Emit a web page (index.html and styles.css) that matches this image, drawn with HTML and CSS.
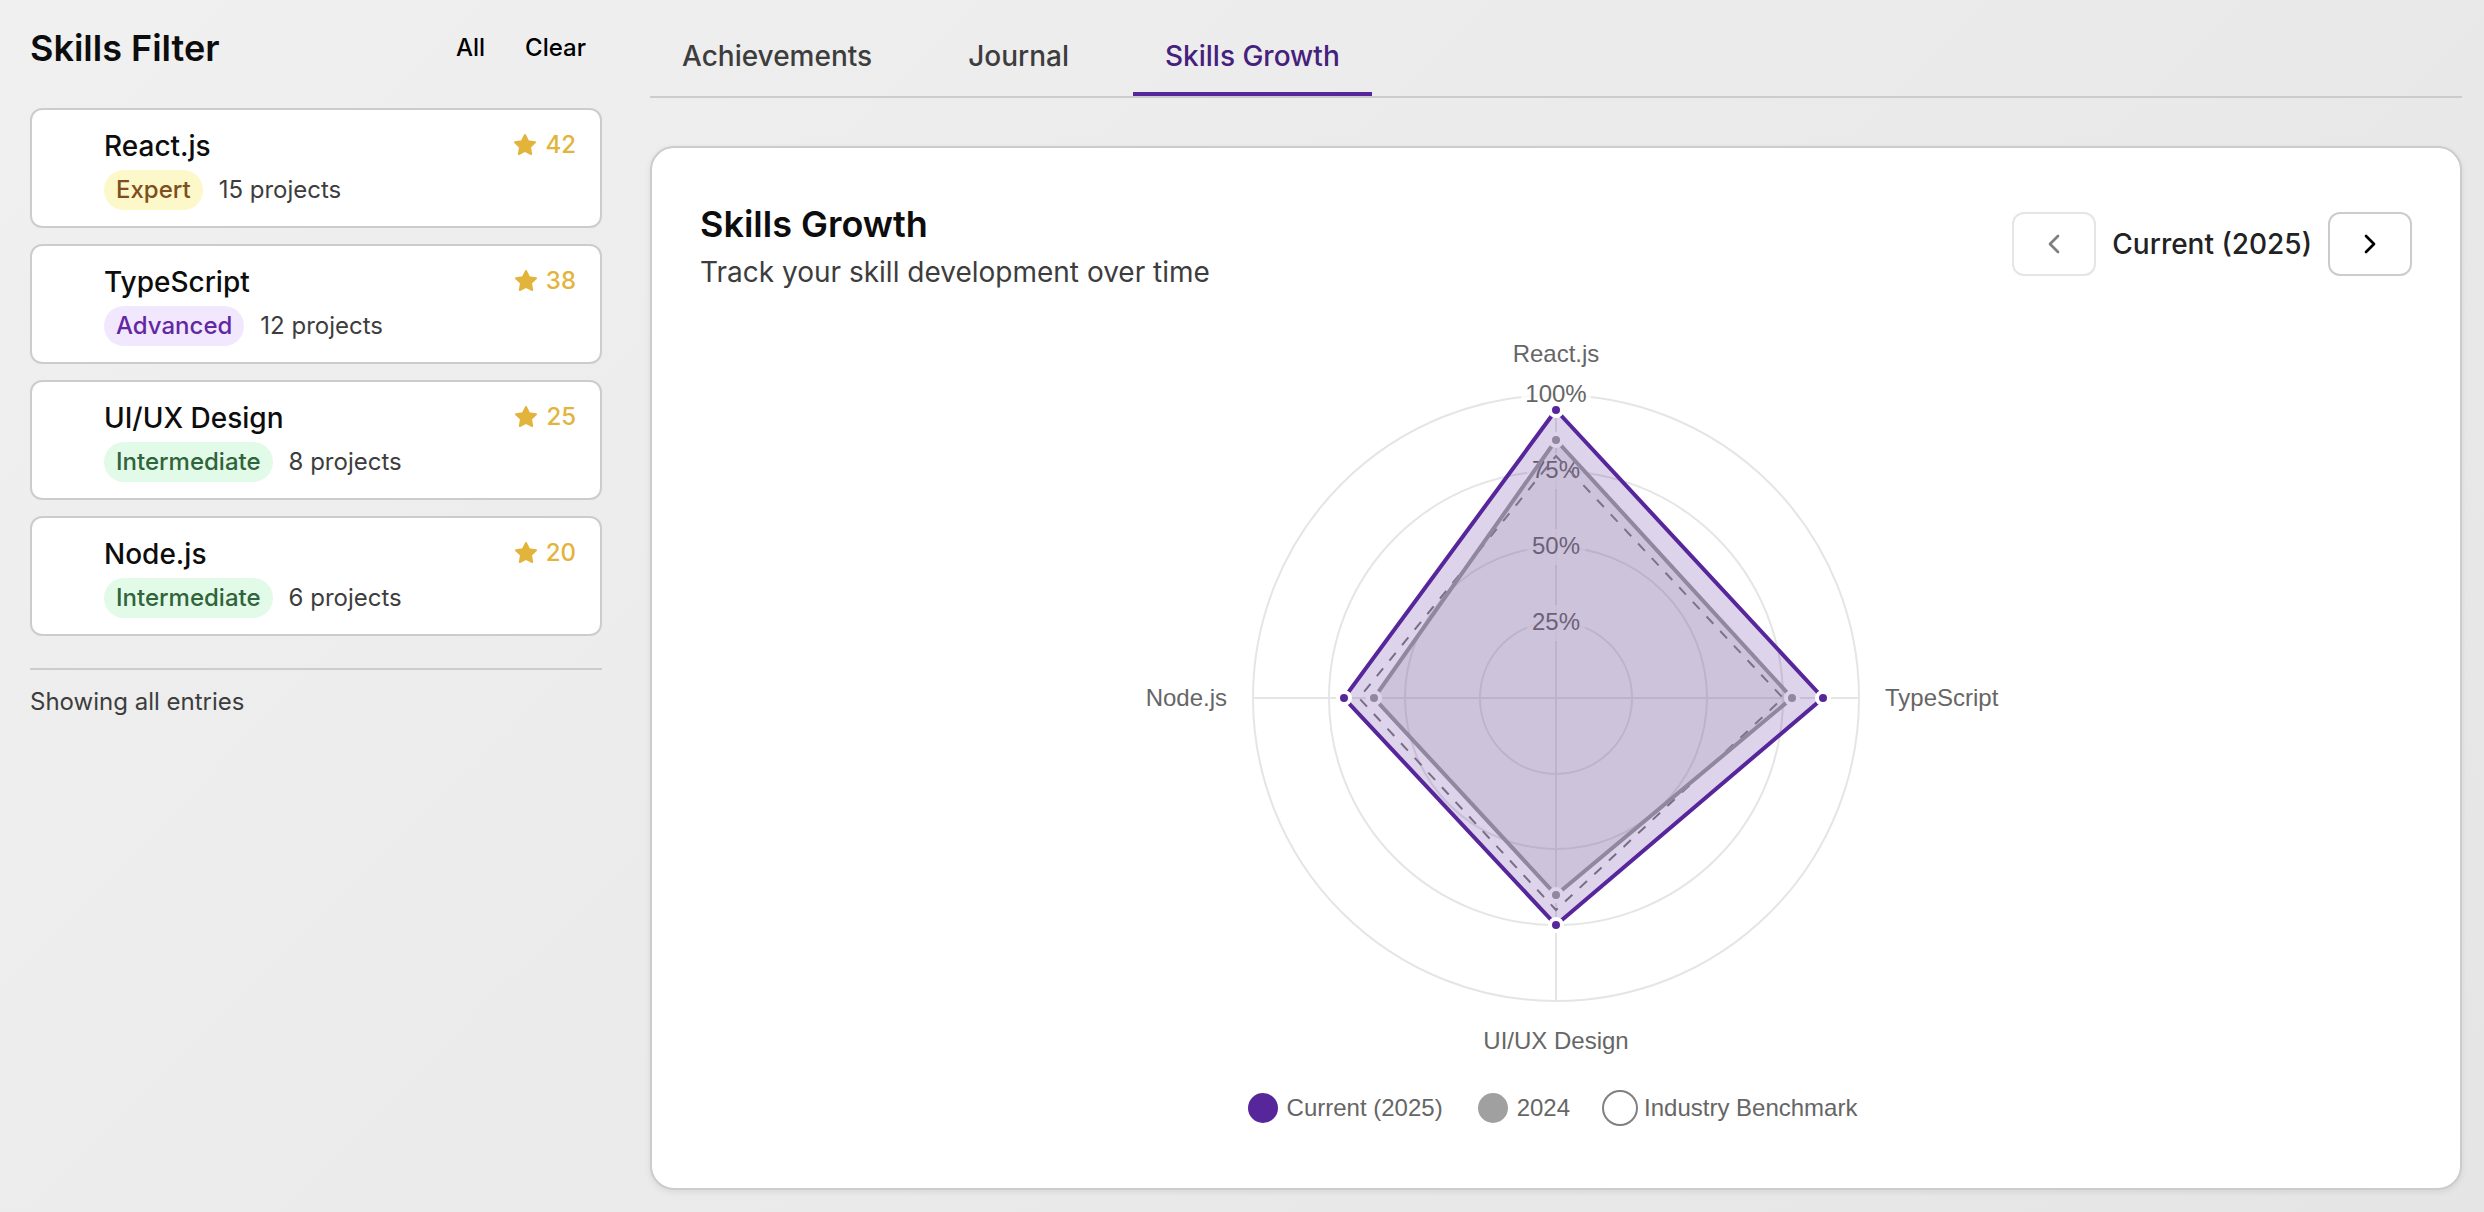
FILE: index.html
```html
<!DOCTYPE html>
<html lang="en">
<head>
<meta charset="utf-8">
<meta name="viewport" content="width=device-width, initial-scale=1">
<title>Skills Growth</title>
<link rel="stylesheet" href="styles.css">
</head>
<body>
<svg class="sprite" aria-hidden="true">
  <symbol id="star" viewBox="0 0 24 24"><polygon points="12 2 15.09 8.26 22 9.27 17 14.14 18.18 21.02 12 17.77 5.82 21.02 7 14.14 2 9.27 8.91 8.26"/></symbol>
</svg>
<div class="layout">
  <aside class="sidebar">
    <header class="sidebar-header">
      <h2 class="heading">Skills Filter</h2>
      <div class="filter-actions">
        <button class="text-button" type="button">All</button>
        <button class="text-button" type="button">Clear</button>
      </div>
    </header>
    <ul class="skill-list">
      <li><button class="skill-card" type="button">
        <span class="skill-icon"></span>
        <span class="skill-body">
          <span class="skill-name">React.js</span>
          <span class="skill-meta"><span class="badge badge-expert">Expert</span><span>15 projects</span></span>
        </span>
        <span class="skill-score"><svg class="star"><use href="#star"/></svg>42</span>
      </button></li>
      <li><button class="skill-card" type="button">
        <span class="skill-icon"></span>
        <span class="skill-body">
          <span class="skill-name">TypeScript</span>
          <span class="skill-meta"><span class="badge badge-advanced">Advanced</span><span>12 projects</span></span>
        </span>
        <span class="skill-score"><svg class="star"><use href="#star"/></svg>38</span>
      </button></li>
      <li><button class="skill-card" type="button">
        <span class="skill-icon"></span>
        <span class="skill-body">
          <span class="skill-name">UI/UX Design</span>
          <span class="skill-meta"><span class="badge badge-intermediate">Intermediate</span><span>8 projects</span></span>
        </span>
        <span class="skill-score"><svg class="star"><use href="#star"/></svg>25</span>
      </button></li>
      <li><button class="skill-card" type="button">
        <span class="skill-icon"></span>
        <span class="skill-body">
          <span class="skill-name">Node.js</span>
          <span class="skill-meta"><span class="badge badge-intermediate">Intermediate</span><span>6 projects</span></span>
        </span>
        <span class="skill-score"><svg class="star"><use href="#star"/></svg>20</span>
      </button></li>
    </ul>
    <p class="filter-status">Showing all entries</p>
  </aside>

  <main class="main">
    <div class="tabs" role="tablist">
      <button class="tab" type="button" role="tab" aria-selected="false">Achievements</button>
      <button class="tab" type="button" role="tab" aria-selected="false">Journal</button>
      <button class="tab" type="button" role="tab" aria-selected="true">Skills Growth</button>
    </div>

    <section class="panel">
      <header class="panel-header">
        <div>
          <h2 class="heading panel-title">Skills Growth</h2>
          <p class="panel-subtitle">Track your skill development over time</p>
        </div>
        <div class="period">
          <button class="period-button" type="button" aria-label="Previous period" disabled>
            <svg class="chevron" viewBox="0 0 24 24"><path d="m15 18-6-6 6-6"/></svg>
          </button>
          <span class="period-label">Current (2025)</span>
          <button class="period-button" type="button" aria-label="Next period">
            <svg class="chevron" viewBox="0 0 24 24"><path d="m9 18 6-6-6-6"/></svg>
          </button>
        </div>
      </header>

      <svg class="radar" viewBox="-450 -406 900 798" role="img" aria-label="Radar chart of skill levels">
        <g class="grid">
          <circle r="76"/><circle r="151"/><circle r="227"/><circle r="303"/>
          <path d="M0-303V303M-303 0H303"/>
        </g>
        <g class="backdrop">
          <rect x="-35" y="-321" width="70" height="36"/>
          <rect x="-29" y="-245" width="58" height="36"/>
          <rect x="-29" y="-169" width="58" height="36"/>
          <rect x="-29" y="-93" width="58" height="36"/>
        </g>
        <g class="label">
          <text y="-296">100%</text>
          <text y="-220">75%</text>
          <text y="-144">50%</text>
          <text y="-68">25%</text>
          <text y="-336">React.js</text>
          <text y="351">UI/UX Design</text>
          <text class="label-start" x="329" y="8">TypeScript</text>
          <text class="label-end" x="-329" y="8">Node.js</text>
        </g>
        <path class="series-benchmark" d="M0-242L227 0L0 212L-197 0Z"/>
        <path class="series-previous" d="M0-258L236 0L0 197L-182 0Z"/>
        <g class="points-previous">
          <circle cy="-258" r="6"/><circle cx="236" r="6"/><circle cy="197" r="6"/><circle cx="-182" r="6"/>
        </g>
        <path class="series-current" d="M0-288L267 0L0 227L-212 0Z"/>
        <g class="points-current">
          <circle cy="-288" r="6"/><circle cx="267" r="6"/><circle cy="227" r="6"/><circle cx="-212" r="6"/>
        </g>
      </svg>

      <ul class="legend">
        <li class="legend-item"><svg class="legend-mark" viewBox="-18 -18 36 36"><circle class="mark-current" r="15"/></svg>Current (2025)</li>
        <li class="legend-item"><svg class="legend-mark" viewBox="-18 -18 36 36"><circle class="mark-previous" r="15"/></svg>2024</li>
        <li class="legend-item"><svg class="legend-mark" viewBox="-18 -18 36 36"><circle class="mark-benchmark" r="17"/></svg>Industry Benchmark</li>
      </ul>
    </section>
  </main>
</div>
</body>
</html>
```
FILE: styles.css
```css
:root {
  --ink: #0d0d0d;
  --muted: #3d3d3d;
  --line: #cccccc;
  --purple: #56269a;
  --gold: #e2b43c;
  --chart-text: #666666;
}

* {
  box-sizing: border-box;
}

body {
  margin: 0;
  min-height: 100vh;
  background: linear-gradient(135deg, #f0f0f0, #e5e5e5);
  color: var(--ink);
  font-family: Inter, "Liberation Sans", sans-serif;
  font-size: 24px;
  line-height: 32px;
}

h2,
p,
ul {
  margin: 0;
  padding: 0;
}

ul {
  list-style: none;
}

button {
  margin: 0;
  border: 0;
  background: none;
  color: inherit;
  font: inherit;
  cursor: pointer;
}

.sprite {
  display: none;
}

.layout {
  display: grid;
  grid-template-columns: 572px minmax(0, 1fr);
  gap: 48px;
  align-items: start;
  padding: 16px 22px 22px 30px;
}

.heading {
  font-size: 36px;
  font-weight: 600;
  line-height: 56px;
}

/* Sidebar */

.sidebar-header {
  display: flex;
  align-items: center;
  justify-content: space-between;
  height: 64px;
  margin-bottom: 28px;
}

.filter-actions {
  display: flex;
  gap: 8px;
}

.text-button {
  padding: 8px 16px;
  color: #000000;
  font-weight: 500;
}

.skill-list {
  display: grid;
  gap: 16px;
}

.skill-card {
  display: flex;
  gap: 16px;
  width: 100%;
  padding: 16px 24px;
  border: 2px solid var(--line);
  border-radius: 12px;
  background: #ffffff;
  text-align: left;
}

.skill-icon {
  width: 32px;
}

.skill-body {
  display: grid;
  flex: 1;
  gap: 4px;
}

.skill-name {
  font-size: 28px;
  font-weight: 500;
  line-height: 40px;
}

.skill-meta {
  display: flex;
  align-items: center;
  gap: 16px;
  color: var(--muted);
}

.badge {
  padding: 4px 12px;
  border-radius: 20px;
  font-weight: 500;
}

.badge-expert {
  background: #fdf8c9;
  color: #7d4f20;
}

.badge-advanced {
  background: #f1e8fd;
  color: #6427a2;
}

.badge-intermediate {
  background: #e2fae8;
  color: #30643b;
}

.skill-score {
  display: flex;
  align-items: center;
  gap: 8px;
  height: 38px;
  color: var(--gold);
  font-weight: 500;
}

.star {
  width: 24px;
  height: 24px;
  fill: currentColor;
  stroke: currentColor;
  stroke-linejoin: round;
  stroke-width: 2;
}

.filter-status {
  margin-top: 32px;
  padding-top: 16px;
  border-top: 2px solid var(--line);
  color: var(--muted);
}

/* Tabs */

.tabs {
  display: flex;
  gap: 32px;
  margin-bottom: 48px;
  border-bottom: 2px solid var(--line);
}

.tab {
  padding: 20px 32px 16px;
  border-bottom: 4px solid transparent;
  color: var(--muted);
  font-size: 28px;
  font-weight: 500;
  line-height: 40px;
}

.tab[aria-selected="true"] {
  border-bottom-color: var(--purple);
  color: #45207c;
}

/* Growth panel */

.panel {
  padding: 48px 48px 14px;
  border: 2px solid var(--line);
  border-radius: 24px;
  background: #ffffff;
  box-shadow: 0 2px 6px rgba(0, 0, 0, 0.08);
}

.panel-header {
  display: flex;
  align-items: center;
  justify-content: space-between;
}

.panel-subtitle {
  color: var(--muted);
  font-size: 28px;
  line-height: 40px;
}

.period {
  display: flex;
  align-items: center;
  gap: 16px;
}

.period-label {
  color: #222222;
  font-size: 28px;
  font-weight: 500;
}

.period-button {
  display: grid;
  place-items: center;
  width: 84px;
  height: 64px;
  padding: 0;
  border: 2px solid var(--line);
  border-radius: 12px;
  color: #000000;
}

.period-button:disabled {
  opacity: 0.5;
  cursor: default;
}

.chevron {
  width: 32px;
  height: 32px;
  fill: none;
  stroke: currentColor;
  stroke-linecap: round;
  stroke-linejoin: round;
  stroke-width: 2;
}

/* Radar chart */

.radar {
  display: block;
  width: 100%;
  max-width: 900px;
  margin: 0 auto;
}

.grid {
  fill: none;
  stroke: #e5e5e5;
  stroke-width: 2;
}

.backdrop {
  fill: #ffffff;
  fill-opacity: 0.75;
}

.label {
  fill: var(--chart-text);
  font-family: "Liberation Sans", Arial, sans-serif;
  font-size: 24px;
  text-anchor: middle;
}

.label-start {
  text-anchor: start;
}

.label-end {
  text-anchor: end;
}

.series-benchmark {
  fill: none;
  stroke: #808080;
  stroke-dasharray: 10 10;
  stroke-width: 2;
}

.series-previous {
  fill: #a0a0a0;
  fill-opacity: 0.2;
  stroke: #a0a0a0;
  stroke-width: 4;
}

.series-current {
  fill: var(--purple);
  fill-opacity: 0.2;
  stroke: var(--purple);
  stroke-width: 4;
}

.points-previous,
.points-current {
  stroke: #ffffff;
  stroke-width: 4;
}

.points-previous {
  fill: #a0a0a0;
}

.points-current {
  fill: var(--purple);
}

.legend {
  display: flex;
  flex-wrap: wrap;
  justify-content: center;
  gap: 32px;
  margin-bottom: 48px;
  padding-right: 10px;
  color: var(--chart-text);
  font-family: "Liberation Sans", Arial, sans-serif;
}

.legend-item {
  display: flex;
  align-items: center;
  gap: 6px;
  height: 36px;
}

.legend-mark {
  width: 36px;
  height: 36px;
}

.mark-current {
  fill: var(--purple);
}

.mark-previous {
  fill: #a0a0a0;
}

.mark-benchmark {
  fill: none;
  stroke: #808080;
  stroke-width: 2;
}
```
